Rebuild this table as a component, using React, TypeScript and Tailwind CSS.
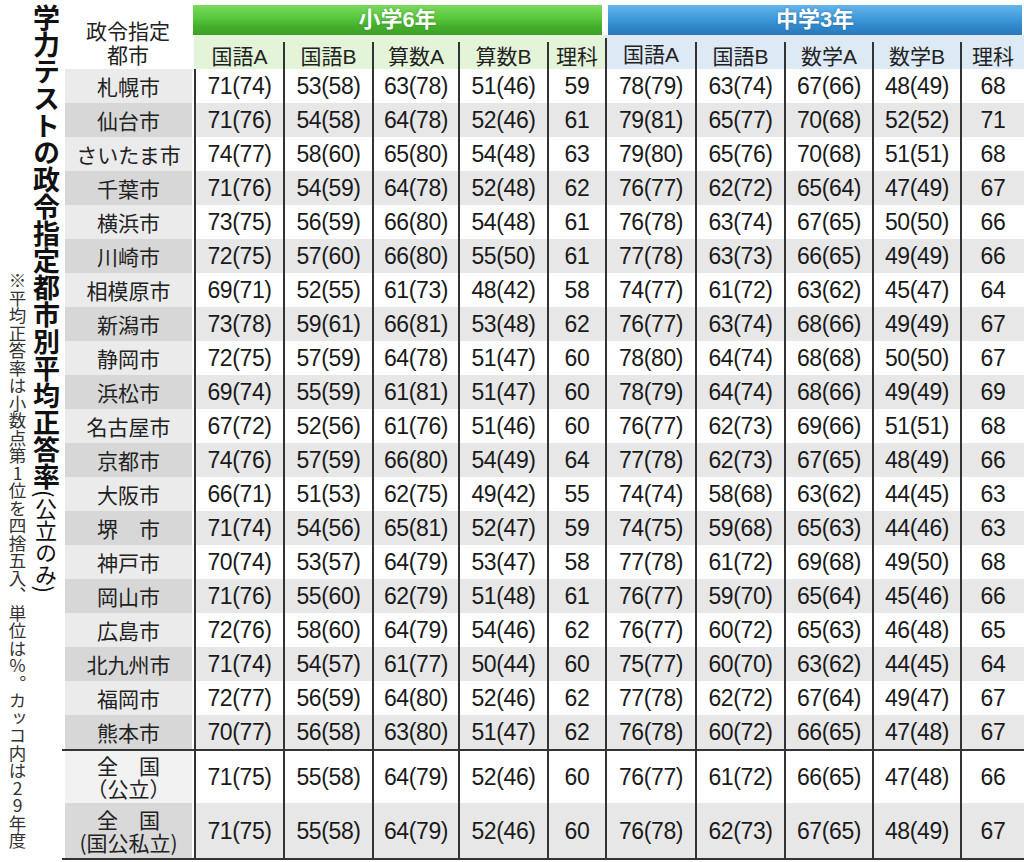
const ELEM_HEADS = ["国語A", "国語B", "算数A", "算数B", "理科"];
const JH_HEADS = ["国語A", "国語B", "数学A", "数学B", "理科"];

// 都市名, 小学6年 x5, 中学3年 x5
const rows: string[][] = [
  ["札幌市", "71(74)", "53(58)", "63(78)", "51(46)", "59", "78(79)", "63(74)", "67(66)", "48(49)", "68"],
  ["仙台市", "71(76)", "54(58)", "64(78)", "52(46)", "61", "79(81)", "65(77)", "70(68)", "52(52)", "71"],
  ["さいたま市", "74(77)", "58(60)", "65(80)", "54(48)", "63", "79(80)", "65(76)", "70(68)", "51(51)", "68"],
  ["千葉市", "71(76)", "54(59)", "64(78)", "52(48)", "62", "76(77)", "62(72)", "65(64)", "47(49)", "67"],
  ["横浜市", "73(75)", "56(59)", "66(80)", "54(48)", "61", "76(78)", "63(74)", "67(65)", "50(50)", "66"],
  ["川崎市", "72(75)", "57(60)", "66(80)", "55(50)", "61", "77(78)", "63(73)", "66(65)", "49(49)", "66"],
  ["相模原市", "69(71)", "52(55)", "61(73)", "48(42)", "58", "74(77)", "61(72)", "63(62)", "45(47)", "64"],
  ["新潟市", "73(78)", "59(61)", "66(81)", "53(48)", "62", "76(77)", "63(74)", "68(66)", "49(49)", "67"],
  ["静岡市", "72(75)", "57(59)", "64(78)", "51(47)", "60", "78(80)", "64(74)", "68(68)", "50(50)", "67"],
  ["浜松市", "69(74)", "55(59)", "61(81)", "51(47)", "60", "78(79)", "64(74)", "68(66)", "49(49)", "69"],
  ["名古屋市", "67(72)", "52(56)", "61(76)", "51(46)", "60", "76(77)", "62(73)", "69(66)", "51(51)", "68"],
  ["京都市", "74(76)", "57(59)", "66(80)", "54(49)", "64", "77(78)", "62(73)", "67(65)", "48(49)", "66"],
  ["大阪市", "66(71)", "51(53)", "62(75)", "49(42)", "55", "74(74)", "58(68)", "63(62)", "44(45)", "63"],
  ["堺　市", "71(74)", "54(56)", "65(81)", "52(47)", "59", "74(75)", "59(68)", "65(63)", "44(46)", "63"],
  ["神戸市", "70(74)", "53(57)", "64(79)", "53(47)", "58", "77(78)", "61(72)", "69(68)", "49(50)", "68"],
  ["岡山市", "71(76)", "55(60)", "62(79)", "51(48)", "61", "76(77)", "59(70)", "65(64)", "45(46)", "66"],
  ["広島市", "72(76)", "58(60)", "64(79)", "54(46)", "62", "76(77)", "60(72)", "65(63)", "46(48)", "65"],
  ["北九州市", "71(74)", "54(57)", "61(77)", "50(44)", "60", "75(77)", "60(70)", "63(62)", "44(45)", "64"],
  ["福岡市", "72(77)", "56(59)", "64(80)", "52(46)", "62", "77(78)", "62(72)", "67(64)", "49(47)", "67"],
  ["熊本市", "70(77)", "56(58)", "63(80)", "51(47)", "62", "76(78)", "60(72)", "66(65)", "47(48)", "67"],
];

const national = [
  { sub: "（公立）", vals: ["71(75)", "55(58)", "64(79)", "52(46)", "60", "76(77)", "61(72)", "66(65)", "47(48)", "66"] },
  { sub: "(国公私立)", vals: ["71(75)", "55(58)", "64(79)", "52(46)", "60", "76(78)", "62(73)", "67(65)", "48(49)", "67"] },
];

function SubHead({ label, kind, first, thick }: { label: string; kind: "e" | "j"; first?: boolean; thick?: boolean }) {
  return (
    <div className={`h-[34px] flex flex-col ${kind === "e" ? "bg-[#e3f4d8]" : "bg-[#dde9f4]"} ${thick ? "pt-[3px]" : "pt-[7px]"}`}>
      <div
        className={`flex-1 flex items-center justify-center pt-[3px] text-[21px] leading-[24px] text-[#222] ${
          first ? "border-l-2 border-transparent" : "border-l-2 border-[#333]"
        }`}
      >
        {label}
      </div>
    </div>
  );
}

function DataCell({ v, gray, h }: { v: string; gray: boolean; h: string }) {
  return (
    <div
      className={`${h} flex items-center justify-center border-l-2 border-[#333] text-[23px] leading-[26px] tracking-[-0.4px] text-[#1a1a1a] ${
        gray ? "bg-[#e7e7e7]" : "bg-white"
      }`}
    >
      {v}
    </div>
  );
}

export default function App() {
  return (
    <div className="w-[1024px] h-[862px] bg-white flex overflow-hidden font-['Liberation_Sans','Noto_Sans_CJK_JP',sans-serif]">
      {/* 縦書きの見出しと注記 */}
      <div className="w-[62px] flex shrink-0">
        <div className="w-[28px] pl-[5px] pt-[272px] [writing-mode:vertical-rl] font-['Noto_Sans_CJK_JP',serif] text-[17.5px] leading-[22px] text-[#333]">
          ※平均正答率は小数点第<span className="[text-orientation:upright]">1</span>位を四捨五入、単位は％。カッコ内は
          <span className="[text-orientation:upright]">29</span>年度
        </div>
        <div className="w-[34px] pt-[4px] [writing-mode:vertical-rl] font-['Noto_Sans_CJK_JP',sans-serif] text-[#111] leading-[32px]">
          <span className="text-[27px] font-bold">学力テストの政令指定都市別平均正答率</span>
          <span className="text-[22px]">(公立のみ)</span>
        </div>
      </div>

      {/* 表 */}
      <div className="pt-[5px]">
        <div className="grid grid-cols-[132px_89px_89px_86px_89px_58px_90px_89px_88px_88px_64px]">
          <div className="row-span-2 flex flex-col items-center justify-end pb-[4px] font-['Noto_Sans_CJK_JP',sans-serif] text-[21px] leading-[22px] text-[#222]">
            <span>政令指定</span>
            <span className="mt-[2px]">都市</span>
          </div>
          <div className="col-span-5 h-[30px] mr-[3px] ml-[-1px] flex items-center justify-center bg-[linear-gradient(#7ad95e,#58c73b_45%,#45b02d_70%,#3d9f29)] text-white text-[22px] leading-[26px] font-bold [text-shadow:0_0_2px_rgba(0,60,0,0.45)]">
            小学6年
          </div>
          <div className="col-span-5 h-[30px] ml-[3px] mr-[2px] flex items-center justify-center bg-[linear-gradient(#62b6ec,#409ad9_45%,#3189cc_70%,#2a78b8)] text-white text-[22px] leading-[26px] font-bold [text-shadow:0_0_2px_rgba(0,30,70,0.45)]">
            中学3年
          </div>

          {ELEM_HEADS.map((h, i) => (
            <SubHead key={"e" + i} label={h} kind="e" first={i === 0} />
          ))}
          {JH_HEADS.map((h, i) => (
            <SubHead key={"j" + i} label={h} kind="j" thick={i === 0} />
          ))}

          {rows.map((r, ri) => {
            const gray = ri % 2 === 1;
            return [
              <div key={r[0]} className="h-[34px] pl-[3px] pr-[2px]">
                <div
                  className={`h-full flex items-center justify-center font-['Noto_Sans_CJK_JP',sans-serif] text-[21px] leading-[24px] text-[#222] ${
                    gray ? "bg-[#d7d7d7]" : "bg-[#ebebeb]"
                  }`}
                >
                  {r[0]}
                </div>
              </div>,
              ...r.slice(1).map((v, ci) => <DataCell key={r[0] + ci} v={v} gray={gray} h="h-[34px]" />),
            ];
          })}

          {national.map((n, ni) => {
            const gray = ni === 1;
            const h = ni === 0 ? "h-[54px] border-t-2 border-t-[#333]" : "h-[57px] border-b-2 border-b-[#333]";
            return [
              <div key={"n" + ni} className={`${h} pl-[3px] pr-[2px]`}>
                <div
                  className={`h-full flex flex-col items-center justify-center font-['Noto_Sans_CJK_JP',sans-serif] text-[21px] leading-[23px] text-[#222] ${
                    gray ? "bg-[#d9d9d9]" : "bg-[#f2f2f2]"
                  }`}
                >
                  <span>全　国</span>
                  <span>{n.sub}</span>
                </div>
              </div>,
              ...n.vals.map((v, ci) => <DataCell key={"n" + ni + ci} v={v} gray={gray} h={h} />),
            ];
          })}
        </div>
      </div>
    </div>
  );
}
